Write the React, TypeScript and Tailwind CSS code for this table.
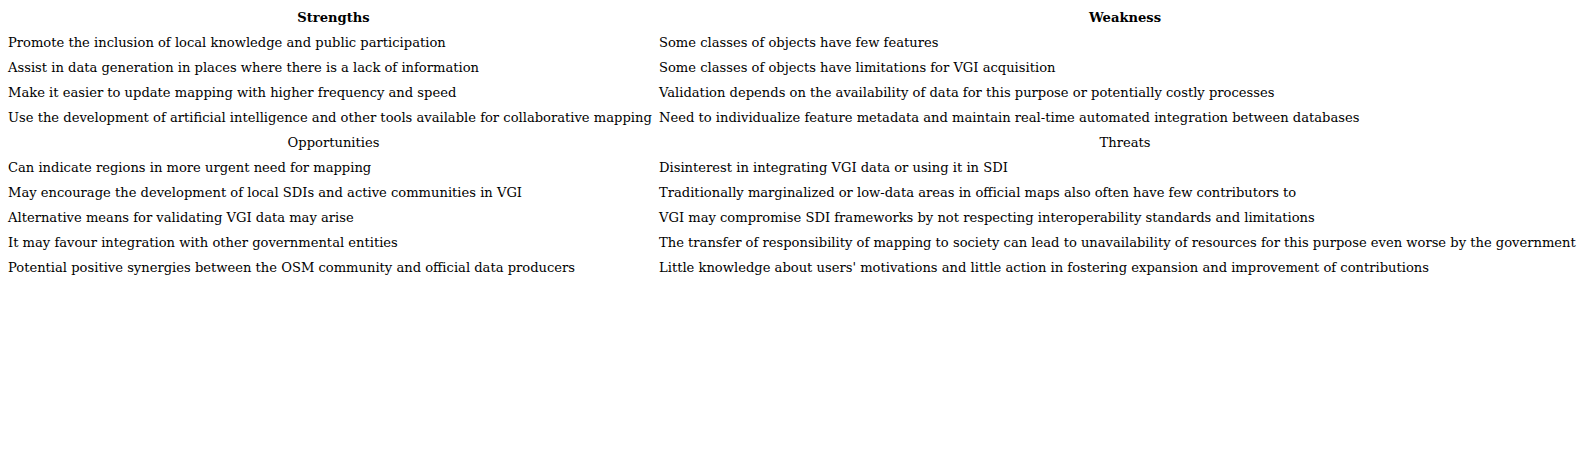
const rows1 = [
  {
    left: 'Promote the inclusion of local knowledge and public participation',
    right: 'Some classes of objects have few features',
  },
  {
    left: 'Assist in data generation in places where there is a lack of information',
    right: 'Some classes of objects have limitations for VGI acquisition',
  },
  {
    left: 'Make it easier to update mapping with higher frequency and speed',
    right: 'Validation depends on the availability of data for this purpose or potentially costly processes',
  },
  {
    left: 'Use the development of artificial intelligence and other tools available for collaborative mapping',
    right: 'Need to individualize feature metadata and maintain real-time automated integration between databases',
  },
];

const rows2 = [
  {
    left: 'Can indicate regions in more urgent need for mapping',
    right: 'Disinterest in integrating VGI data or using it in SDI',
  },
  {
    left: 'May encourage the development of local SDIs and active communities in VGI',
    right: 'Traditionally marginalized or low-data areas in official maps also often have few contributors to',
  },
  {
    left: 'Alternative means for validating VGI data may arise',
    right: 'VGI may compromise SDI frameworks by not respecting interoperability standards and limitations',
  },
  {
    left: 'It may favour integration with other governmental entities',
    right: 'The transfer of responsibility of mapping to society can lead to unavailability of resources for this purpose even worse by the government',
  },
  {
    left: 'Potential positive synergies between the OSM community and official data producers',
    right: "Little knowledge about users' motivations and little action in fostering expansion and improvement of contributions",
  },
];

const Cell = ({ children, head, bold }: { children: React.ReactNode; head?: boolean; bold?: boolean }) => (
  <div
    className={`h-[25px] leading-[25px] whitespace-nowrap ${head ? 'text-center' : ''} ${bold ? 'font-bold' : ''}`}
  >
    {children}
  </div>
);

export default function App() {
  return (
    <div
      className="w-[1591px] h-[470px] bg-white text-black pt-[5px] pl-[8px] text-[13.1px]"
      style={{ fontFamily: '"DejaVu Serif", "Liberation Serif", serif' }}
    >
      <div className="grid grid-cols-[651px_1fr]">
        <Cell head bold>Strengths</Cell>
        <Cell head bold>Weakness</Cell>
        {rows1.map((r) => (
          <>
            <Cell>{r.left}</Cell>
            <Cell>{r.right}</Cell>
          </>
        ))}
        <Cell head>Opportunities</Cell>
        <Cell head>Threats</Cell>
        {rows2.map((r) => (
          <>
            <Cell>{r.left}</Cell>
            <Cell>{r.right}</Cell>
          </>
        ))}
      </div>
    </div>
  );
}
